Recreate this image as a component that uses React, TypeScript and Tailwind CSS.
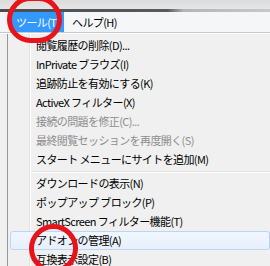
import React from "react"

type Item = { label: string; disabled?: boolean; active?: boolean } | "sep"

const items: Item[] = [
  { label: "閲覧履歴の削除(D)..." },
  { label: "InPrivate ブラウズ(I)" },
  { label: "追跡防止を有効にする(K)" },
  { label: "ActiveX フィルター(X)" },
  { label: "接続の問題を修正(C)...", disabled: true },
  { label: "最終閲覧セッションを再度開く(S)", disabled: true },
  { label: "スタート メニューにサイトを追加(M)" },
  "sep",
  { label: "ダウンロードの表示(N)" },
  { label: "ポップアップ ブロック(P)" },
  { label: "SmartScreen フィルター機能(T)" },
  { label: "アドオンの管理(A)", active: true },
  { label: "互換表示設定(B)" },
]

export default function App() {
  return (
    <div className="relative w-[270px] h-[266px] overflow-hidden bg-[#f0f0f0] font-['Noto_Sans_CJK_JP',sans-serif] text-[11px] tracking-[-0.6px] text-black">
      {/* window strip above the menu bar */}
      <div className="h-[9px] bg-[linear-gradient(to_bottom,#dcdcdc,#e6e6e6)]" />
      <div className="h-[3px] bg-[linear-gradient(to_right,#4d4d4d,#5a5a5a_62%,#b5b5b5_68%,#c8c8c8)]" />

      {/* menu bar */}
      <div className="flex h-[20px] items-stretch bg-[#f5f6f7] pl-[11px] leading-[20px]">
        <div className="w-[53px] bg-[#3399ff] pl-[5px] text-white whitespace-nowrap">ツール(T)</div>
        <div className="pl-[8px]">ヘルプ(H)</div>
      </div>
      <div className="h-px bg-[#c8c8c8]" />
      <div className="h-px bg-white" />

      {/* dropdown */}
      <div className="flex">
        <div className="w-[7px] shrink-0" />
        <div className="flex-1 border-l border-[#979797] pt-[2px] bg-[linear-gradient(to_right,#f0f0f0_21px,#e2e3e3_21px,#e2e3e3_22px,#ffffff_22px,#ffffff_23px,#f0f0f0_23px)]">
          {items.map((it, i) =>
            it === "sep" ? (
              <div key={i} className="flex h-[5px] flex-col justify-center pl-[24px]">
                <div className="h-px bg-[#e2e3e3]" />
                <div className="h-px bg-white" />
              </div>
            ) : (
              <div
                key={i}
                className={
                  it.active
                    ? "ml-[2px] h-[19px] rounded-[3px] border border-[#b8d6fb] bg-[linear-gradient(to_bottom,#f2f7fe,#e6effb)] pl-[25px] leading-[17px] whitespace-nowrap"
                    : "ml-[2px] h-[19px] border border-transparent pl-[25px] leading-[17px] whitespace-nowrap " +
                      (it.disabled ? "text-[#8d8d8d]" : "")
                }
              >
                {it.label}
              </div>
            )
          )}
        </div>
      </div>

      {/* red annotation rings */}
      <div className="absolute left-[7px] top-[-4px] h-[47px] w-[55px] rounded-full border-[5px] border-[#e8141b]" />
      <div className="absolute left-[29px] top-[224px] h-[49px] w-[49px] rounded-full border-[5px] border-[#e8141b]" />
    </div>
  )
}
